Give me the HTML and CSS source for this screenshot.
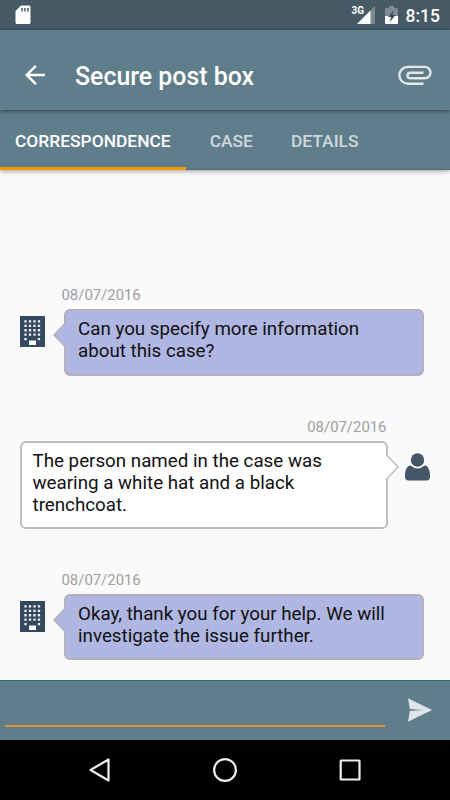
FILE: index.html
```html
<!DOCTYPE html>
<html lang="en">
<head>
    <meta charset="UTF-8">
    <meta name="viewport" content="width=device-width, initial-scale=1.0">
    <title>Secure post box</title>
    <link rel="stylesheet" href="styles.css">
</head>
<body>
    <svg class="symbols" width="0" height="0">
        <symbol id="building" viewBox="0 0 25 31">
            <rect width="25" height="31" fill="#34495e"/>
            <path d="M5.500 4.200v20M10 4.200v15.500M14.500 4.200v15.500M19 4.200v20" stroke="#eef3f3" stroke-width="2.300" stroke-dasharray="2.300 2.150" fill="none"/>
            <rect x="9" y="24.500" width="7" height="4.500" fill="#fff"/>
        </symbol>
    </svg>
    <div class="screen">
        <div class="status-bar">
            <svg class="sd-card" width="16" height="20" viewBox="0 0 16 20">
                <path d="M6 .5h8a1.5 1.5 0 0 1 1.500 1.500v15.500a1.500 1.500 0 0 1-1.500 1.500H2a1.500 1.500 0 0 1-1.500-1.500V6z" fill="#fff"/>
                <path d="M7 3v3.500M10 3v3.500M13 3v3.500" stroke="#455a64" stroke-width="1.500"/>
            </svg>
            <div class="signal">
                <span class="network">3G</span>
                <svg width="18" height="18" viewBox="0 0 18 18">
                    <path d="M18 0v18H0z" fill="#7d8c93"/>
                    <path d="M13.500 4.500V18H0z" fill="#fff"/>
                </svg>
            </div>
            <svg class="battery" width="13" height="18" viewBox="0 0 13 18">
                <path d="M1 2h3V0h5v2h3q1 0 1 1v7H0V3q0-1 1-1z" fill="#7d8c93"/>
                <path d="M0 10h13v7q0 1-1 1H1q-1 0-1-1z" fill="#fff"/>
                <path d="M8.500 4.500 3 11h3l-1 5 5.500-7H7.500z" fill="#3b5059"/>
            </svg>
            <span class="clock">8:15</span>
        </div>

        <div class="toolbar">
            <svg width="30" height="30" viewBox="0 0 24 24">
                <path d="M20 11H7.830l5.590-5.590L12 4l-8 8 8 8 1.410-1.410L7.830 13H20v-2z" fill="#fff"/>
            </svg>
            <h1>Secure post box</h1>
            <svg class="attach" width="34" height="20" viewBox="0 0 34 20">
                <path d="M25.500 18.700H9.800a8.400 8.400 0 0 1 0-16.800H26.800a5.700 5.700 0 0 1 0 11.400H12.300a2.800 2.800 0 0 1 0-5.600H25.500" fill="none" stroke="#e2e7ea" stroke-width="2.400"/>
            </svg>
        </div>

        <div class="tabs">
            <div class="tab active">CORRESPONDENCE</div>
            <div class="tab">CASE</div>
            <div class="tab">DETAILS</div>
        </div>

        <div class="messages">
            <div class="message received">
                <div class="date">08/07/2016</div>
                <div class="row">
                    <svg class="avatar" width="25" height="31"><use href="#building"/></svg>
                    <div class="bubble">
                        <svg class="tail" width="13" height="24" viewBox="0 0 13 24">
                            <path d="M13 .500H12L1 12l11 11.500h1z" fill="#b0b7e3"/>
                            <path d="M12 .500 1 12l11 11.500" fill="none" stroke="#b2b2b8" stroke-width="1.500"/>
                        </svg>
                        Can you specify more information<br>about this case?
                    </div>
                </div>
            </div>

            <div class="message sent">
                <div class="date">08/07/2016</div>
                <div class="row">
                    <div class="bubble">
                        <svg class="tail" width="13" height="24" viewBox="0 0 13 24">
                            <path d="M0 .500H1L12 12 1 23.500H0z" fill="#fff"/>
                            <path d="M1 .500 12 12 1 23.500" fill="none" stroke="#bdbdbd" stroke-width="1.500"/>
                        </svg>
                        The person named in the case was<br>wearing a white hat and a black<br>trenchcoat.
                    </div>
                    <svg class="avatar" width="25" height="28" viewBox="0 0 25 28">
                        <circle cx="12.500" cy="7" r="6.700" fill="#435566"/>
                        <path d="M5.500 12.500Q9 15.500 12.500 15.500T19.500 12.500C23.500 13 25 17.500 25 23.500Q25 27.500 21.500 27.500H3.500Q0 27.500 0 23.500C0 17.500 1.500 13 5.500 12.500z" fill="#435566"/>
                    </svg>
                </div>
            </div>

            <div class="message received">
                <div class="date">08/07/2016</div>
                <div class="row">
                    <svg class="avatar" width="25" height="31"><use href="#building"/></svg>
                    <div class="bubble">
                        <svg class="tail" width="13" height="24" viewBox="0 0 13 24">
                            <path d="M13 .500H12L1 12l11 11.500h1z" fill="#b0b7e3"/>
                            <path d="M12 .500 1 12l11 11.500" fill="none" stroke="#b2b2b8" stroke-width="1.500"/>
                        </svg>
                        Okay, thank you for your help. We will<br>investigate the issue further.
                    </div>
                </div>
            </div>
        </div>

        <div class="composer">
            <div class="input"></div>
            <svg width="24" height="24" viewBox="0 0 24 24">
                <defs>
                    <linearGradient id="slit">
                        <stop offset="0" stop-color="#607d8b"/>
                        <stop offset="1" stop-color="#dfe5e8"/>
                    </linearGradient>
                </defs>
                <path d="M0 .300 24 12 0 23.700 2 12z" fill="#dfe5e8"/>
                <path d="M1.500 11 17 11.500v1L1.500 13z" fill="url(#slit)"/>
            </svg>
        </div>

        <div class="nav-bar">
            <svg width="26" height="26" viewBox="0 0 26 26">
                <path d="M21.500 2.500v21L3.500 13z"/>
            </svg>
            <svg width="26" height="26" viewBox="0 0 26 26">
                <circle cx="13" cy="13" r="10.900"/>
            </svg>
            <svg width="26" height="26" viewBox="0 0 26 26">
                <rect x="3.700" y="3.500" width="18.800" height="19" rx=".500"/>
            </svg>
        </div>
    </div>
</body>
</html>
```
FILE: styles.css
```css
* {
    box-sizing: border-box;
}

body {
    margin: 0;
    font-family: Roboto, sans-serif;
    background: #fafafa;
}

svg {
    display: block;
    flex: none;
}

.symbols {
    position: absolute;
}

.screen {
    display: flex;
    flex-direction: column;
    width: 450px;
    height: 800px;
    overflow: hidden;
}

.status-bar, .toolbar, .tabs, .composer, .nav-bar {
    flex-shrink: 0;
}

.status-bar {
    display: flex;
    height: 30px;
    padding: 5px 10px 0 14.5px;
    background: #455a64;
    color: #fff;
}

.signal {
    position: relative;
    margin: 1px 10px 0 auto;
}

.network {
    position: absolute;
    top: -1px;
    left: -5px;
    font-size: 10px;
    font-weight: 700;
    line-height: 11px;
}

.battery {
    margin: 1px 8px 0 0;
}

.clock {
    font-size: 17.5px;
    font-weight: 500;
    line-height: 22px;
}

.toolbar {
    position: relative;
    display: flex;
    align-items: center;
    height: 80px;
    padding: 0 18px 0 20px;
    background: #607d8b;
    box-shadow: 0 1px 4px rgba(0, 0, 0, 0.5);
    color: #fff;
}

.toolbar svg {
    margin-top: 10px;
}

h1 {
    margin: 13px 0 0 25px;
    font-size: 24.9px;
    font-weight: 500;
    line-height: 30px;
}

.toolbar .attach {
    margin-left: auto;
}

.tabs {
    display: flex;
    height: 60px;
    background: #607d8b;
    border-bottom: 1px solid #546e7a;
    box-shadow: 0 1px 5px rgba(0, 0, 0, 0.4);
}

.tab {
    height: 60px;
    padding: 0 23px 0 15px;
    font-size: 17.4px;
    font-weight: 500;
    line-height: 62px;
    color: #cfd8dc;
}

.tab.active {
    margin-right: 9px;
    padding-right: 15px;
    border-bottom: 3px solid #ff9800;
    color: #fff;
}

.messages {
    flex: 1;
    min-height: 0;
    padding: 116px 20px 0;
}

.message {
    margin-bottom: 42px;
}

.date {
    height: 23px;
    padding: 0 42px 0 41.5px;
    font-size: 14.9px;
    line-height: 18px;
    color: #9e9e9e;
}

.sent .date {
    padding-right: 43.5px;
    text-align: right;
}

.row {
    display: flex;
}

.bubble {
    position: relative;
    height: 66.5px;
    padding: 7px 12px;
    border: 2px solid #b2b2b8;
    border-radius: 6px;
    font-size: 18.75px;
    line-height: 22px;
    color: #111;
    white-space: nowrap;
}

.received .avatar {
    margin: 7px 19px 0 0;
}

.received .bubble {
    width: 360px;
    background: #b0b7e3;
}

.sent .bubble {
    width: 368px;
    height: 88px;
    padding-left: 10.5px;
    border-color: #bdbdbd;
    background: #fff;
}

.sent .avatar {
    margin: 12px 0 0 17px;
}

.tail {
    position: absolute;
    top: 12px;
    left: -13px;
}

.sent .tail {
    right: -13px;
    left: auto;
}

.composer {
    display: flex;
    height: 60px;
    padding: 17px 18px 0 5px;
    background: #607d8b;
    border-top: 1px solid #37687c;
}

.input {
    width: 380px;
    height: 29px;
    margin-right: 23px;
    border-bottom: 2px solid #df9144;
}

.nav-bar {
    display: flex;
    justify-content: center;
    gap: 99px;
    height: 60px;
    padding-top: 17px;
    background: #000;
}

.nav-bar svg {
    fill: none;
    stroke: #eee;
    stroke-width: 2.2;
    stroke-linejoin: round;
}
```
